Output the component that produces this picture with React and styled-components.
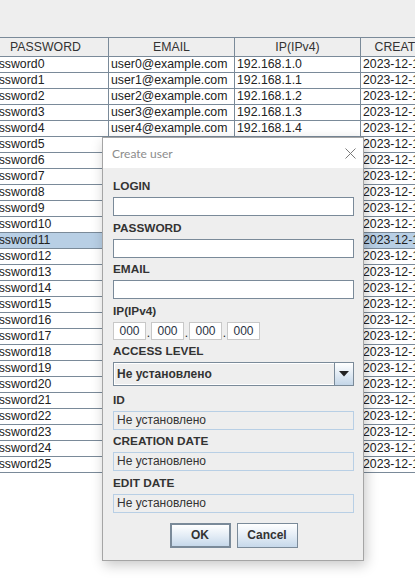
import React from 'react'
import styled, { createGlobalStyle } from 'styled-components'

const GlobalStyle = createGlobalStyle`
  html, body {
    margin: 0;
    padding: 0;
    background: #ffffff;
  }
  body {
    font-family: 'Liberation Sans', Arial, sans-serif;
  }
`

const GRID = '#7a8a99'
const SELECT = '#b8cfe5'

const rows = Array.from({ length: 26 }, (_, i) => ({
  password: `password${i}`,
  email: `user${i}@example.com`,
  ip: `192.168.1.${i}`,
  created: '2023-12-15 10:00:00',
}))

const columns = [
  { key: 'password', title: 'PASSWORD', width: 126 },
  { key: 'email', title: 'EMAIL', width: 126 },
  { key: 'ip', title: 'IP(IPv4)', width: 126 },
  { key: 'created', title: 'CREATION DATE', width: 126 },
]

const Screen = styled.div`
  position: relative;
  width: 415px;
  height: 579px;
  overflow: hidden;
  background: #ffffff;
`

const TopStrip = styled.div`
  height: 37px;
  background: #eeeeee;
`

const Viewport = styled.div`
  overflow: hidden;
  width: 415px;
`

const Table = styled.div`
  margin-left: -17px;
  width: 600px;
  font-size: 12.3px;
  color: #222;
`

const HeaderRow = styled.div`
  display: flex;
  height: 20px;
  box-sizing: border-box;
  border-top: 1px solid ${GRID};
  border-bottom: 1px solid ${GRID};
  background: #eeeeee;
  color: #333;
`

const HeaderCell = styled.div`
  flex: 0 0 ${({ $w }) => $w}px;
  box-sizing: border-box;
  border-right: 1px solid ${GRID};
  line-height: 18px;
  text-align: center;
  white-space: nowrap;
  overflow: hidden;
`

const Row = styled.div`
  display: flex;
  height: 16px;
  box-sizing: border-box;
  border-bottom: 1px solid ${GRID};
  background: ${({ $selected }) => ($selected ? SELECT : '#ffffff')};
`

const Cell = styled.div`
  flex: 0 0 ${({ $w }) => $w}px;
  box-sizing: border-box;
  border-right: 1px solid ${GRID};
  padding-left: 2px;
  line-height: 15px;
  white-space: nowrap;
  overflow: hidden;
`

const Dialog = styled.div`
  position: absolute;
  left: 102px;
  top: 137px;
  width: 262px;
  box-sizing: border-box;
  border: 1px solid #a5a5a5;
  background: #eeeeee;
  box-shadow: 2px 4px 12px rgba(0, 0, 0, 0.22);
`

const TitleBar = styled.div`
  display: flex;
  align-items: center;
  justify-content: space-between;
  height: 30px;
  padding: 0 7px 0 9px;
  background: #ffffff;
`

const Title = styled.span`
  font-family: Lato, 'Noto Sans', sans-serif;
  font-size: 12px;
  color: #8c8c8c;
`

const CloseIcon = styled.svg`
  width: 11px;
  height: 11px;
`

const Body = styled.div`
  display: flex;
  flex-direction: column;
  padding: 12px 9px 12px 10px;
`

const Group = styled.div`
  display: flex;
  flex-direction: column;
  margin-bottom: ${({ $after }) => $after ?? 5.5}px;
`

const Label = styled.div`
  font-size: 11.8px;
  font-weight: bold;
  color: #333;
  line-height: 13px;
  height: 13px;
  margin-bottom: 4px;
`

const TextField = styled.div`
  height: 19px;
  box-sizing: border-box;
  background: #ffffff;
  border: 1px solid ${GRID};
`

const ReadOnlyField = styled.div`
  height: 19px;
  box-sizing: border-box;
  background: #eeeeee;
  border: 1px solid #b8cfe5;
  padding-left: 3px;
  font-size: 12px;
  line-height: 17px;
  color: #333;
`

const IpRow = styled.div`
  display: flex;
  align-items: flex-end;
`

const IpBox = styled.div`
  width: 33px;
  height: 18px;
  box-sizing: border-box;
  border: 1px solid #c8c8c8;
  background: #ffffff;
  font-size: 12px;
  line-height: 16px;
  text-align: center;
  color: #2a3344;
`

const IpDot = styled.span`
  width: 5px;
  text-align: center;
  font-size: 12px;
  line-height: 14px;
  color: #222;
`

const Combo = styled.div`
  display: flex;
  height: 24px;
  box-sizing: border-box;
  border: 1px solid ${GRID};
  background: #eeeeee;
`

const ComboValue = styled.div`
  flex: 1;
  box-sizing: border-box;
  border: 1px solid #ffffff;
  border-right: none;
  padding-left: 2px;
  font-size: 12px;
  font-weight: bold;
  line-height: 20px;
  color: #333;
`

const ComboButton = styled.div`
  flex: 0 0 18px;
  display: flex;
  align-items: center;
  justify-content: center;
  border-left: 1px solid ${GRID};
  background: linear-gradient(#ffffff, #dfe9f3 55%, #c4d6e8);
`

const Buttons = styled.div`
  display: flex;
  justify-content: center;
  gap: 6px;
  margin-top: 4.5px;
`

const Button = styled.div`
  width: 61px;
  height: 25px;
  box-sizing: border-box;
  border: ${({ $focused }) => ($focused ? 2 : 1)}px solid ${GRID};
  background: linear-gradient(#ffffff, #e4edf6 50%, #c6d8ea);
  font-size: 12px;
  font-weight: bold;
  color: #333;
  display: flex;
  align-items: center;
  justify-content: center;
`

const Field = ({ label, children, after }) => (
  <Group $after={after}>
    <Label>{label}</Label>
    {children}
  </Group>
)

export default function App() {
  return (
    <>
      <GlobalStyle />
      <Screen>
        <TopStrip />
        <Viewport>
          <Table>
            <HeaderRow>
              {columns.map((c) => (
                <HeaderCell key={c.key} $w={c.width}>
                  {c.title}
                </HeaderCell>
              ))}
            </HeaderRow>
            {rows.map((r, i) => (
              <Row key={i} $selected={i === 11}>
                {columns.map((c) => (
                  <Cell key={c.key} $w={c.width}>
                    {r[c.key]}
                  </Cell>
                ))}
              </Row>
            ))}
          </Table>
        </Viewport>

        <Dialog>
          <TitleBar>
            <Title>Create user</Title>
            <CloseIcon viewBox="0 0 11 11">
              <path d="M0.5 0.5 L10.5 10.5 M10.5 0.5 L0.5 10.5" stroke="#7a7a7a" strokeWidth="1" fill="none" />
            </CloseIcon>
          </TitleBar>
          <Body>
            <Field label="LOGIN">
              <TextField />
            </Field>
            <Field label="PASSWORD">
              <TextField />
            </Field>
            <Field label="EMAIL">
              <TextField />
            </Field>
            <Field label="IP(IPv4)">
              <IpRow>
                <IpBox>000</IpBox>
                <IpDot>.</IpDot>
                <IpBox>000</IpBox>
                <IpDot>.</IpDot>
                <IpBox>000</IpBox>
                <IpDot>.</IpDot>
                <IpBox>000</IpBox>
              </IpRow>
            </Field>
            <Field label="ACCESS LEVEL" after={7.5}>
              <Combo>
                <ComboValue>Не установлено</ComboValue>
                <ComboButton>
                  <svg width="10" height="6" viewBox="0 0 10 6">
                    <path d="M0 0 H10 L5 5.5 Z" fill="#222" />
                  </svg>
                </ComboButton>
              </Combo>
            </Field>
            <Field label="ID">
              <ReadOnlyField>Не установлено</ReadOnlyField>
            </Field>
            <Field label="CREATION DATE">
              <ReadOnlyField>Не установлено</ReadOnlyField>
            </Field>
            <Field label="EDIT DATE">
              <ReadOnlyField>Не установлено</ReadOnlyField>
            </Field>
            <Buttons>
              <Button $focused>OK</Button>
              <Button>Cancel</Button>
            </Buttons>
          </Body>
        </Dialog>
      </Screen>
    </>
  )
}
